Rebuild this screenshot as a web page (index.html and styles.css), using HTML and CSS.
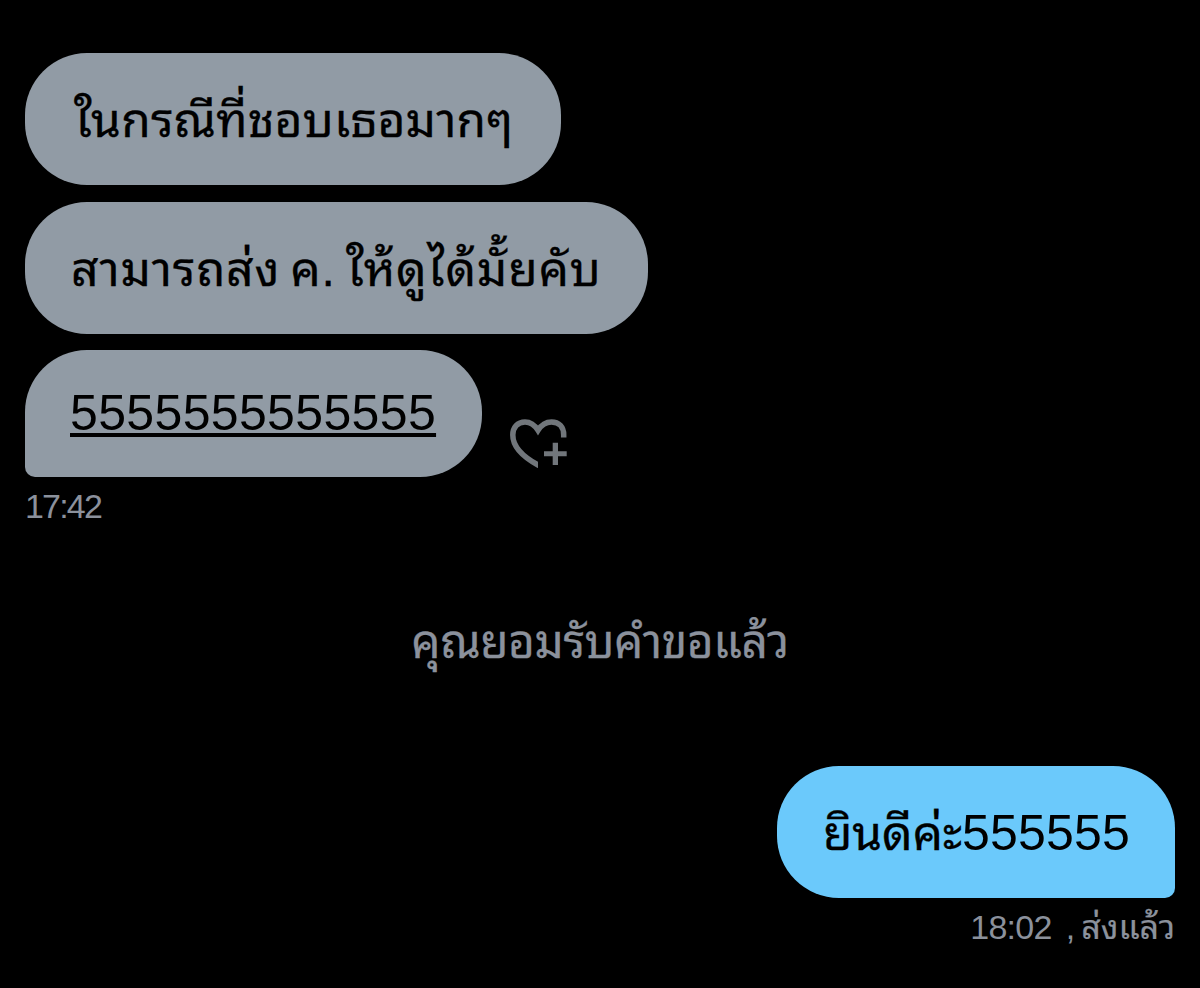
FILE: index.html
```html
<!DOCTYPE html>
<html lang="th"><head><meta charset="utf-8"><title>Chat</title><link rel="stylesheet" href="styles.css"></head>
<body><main class="chat">
<div class="bubble first"><span class="text">ในกรณีที่ชอบเธอมากๆ</span></div>
<div class="bubble second"><span class="text">สามารถส่ง ค. ให้ดูได้มั้ยคับ</span></div>
<div class="row"><div class="bubble third"><a class="link">5555555555555</a></div>
<svg class="heart" viewBox="0 0 60 54" width="60" height="54"><clipPath id="open-corner"><path d="M0 0H60V21.5H30V54H0Z"/></clipPath><path class="outline" clip-path="url(#open-corner)" d="M55.7 24V19C55.7 11 51 6 43.5 6C37 6 33 9.5 30 14.3C27 9.5 23 6 17 6C9.5 6 4.8 11.5 4.8 19C4.8 30 13.5 40 30 49L34 51"/><path d="M44.7 26.7H50V35.3H58.7V40.3H50V49H44.7V40.3H36V35.3H44.7Z"/></svg></div>
<time class="time">17:42</time>
<p class="notice">คุณยอมรับคำขอแล้ว</p>
<div class="bubble sent"><span class="text">ยินดีค่ะ<span class="digits">555555</span></span></div>
<div class="status"><time class="sent-time">18:02</time><span class="comma">,</span><span class="delivered">ส่งแล้ว</span></div>
</main></body></html>
```
FILE: styles.css
```css
*{box-sizing:border-box}
body{margin:0;background:#000;font-family:"Liberation Sans","Noto Looped Thai","Noto Sans Thai Looped",Loma,Garuda,Waree,Umpush,Laksaman,"Noto Serif Thai","Noto Sans Thai",sans-serif}
.chat{height:988px;padding:53px 25px 0;display:flex;flex-direction:column;align-items:flex-start}
.bubble{display:flex;align-items:center;flex-shrink:0;background:#919ba5;border-radius:62px;height:132px;padding:4px 0 0 46px;white-space:nowrap;color:#000}
.text{font-size:48px;line-height:60px;-webkit-text-stroke:.3px currentColor}
.first{width:536px;padding-left:49px}
.first .text{letter-spacing:.15px}
.second{width:623px;margin-top:17px}
.second .text{letter-spacing:.8px;word-spacing:-4px}
.row{display:flex;margin-top:16px}
.third{width:457px;height:127px;padding-top:0;border-radius:62px 62px 62px 10px}
.link{font-size:50px;letter-spacing:.35px;line-height:60px;text-decoration:underline;text-decoration-thickness:4px;text-underline-offset:3px;margin:-2px 0 0 -1px}
.heart{margin:66px 0 0 26px;fill:#71767b}
.outline{fill:none;stroke:#71767b;stroke-width:5.5px}
.time,.status{font-size:34px;line-height:40px;color:#8b919c}
.time{letter-spacing:-1.8px;margin-top:9px}
.notice{align-self:center;margin:86px 0 0;font-size:46px;letter-spacing:-.4px;line-height:60px;color:#8b919c;-webkit-text-stroke:.3px currentColor}
.sent{align-self:flex-end;width:398px;margin-top:94px;padding-top:2px;background:#6bc9fb;border-radius:62px 62px 10px 62px}
.sent .text{letter-spacing:-.2px}
.sent .digits{font-size:50px;letter-spacing:.2px;-webkit-text-stroke:0}
.status{align-self:flex-end;margin-top:9px;display:flex}
.sent-time{letter-spacing:-.7px}
.comma{margin:0 6px 0 14px}
.delivered{-webkit-text-stroke:.2px currentColor}
```
